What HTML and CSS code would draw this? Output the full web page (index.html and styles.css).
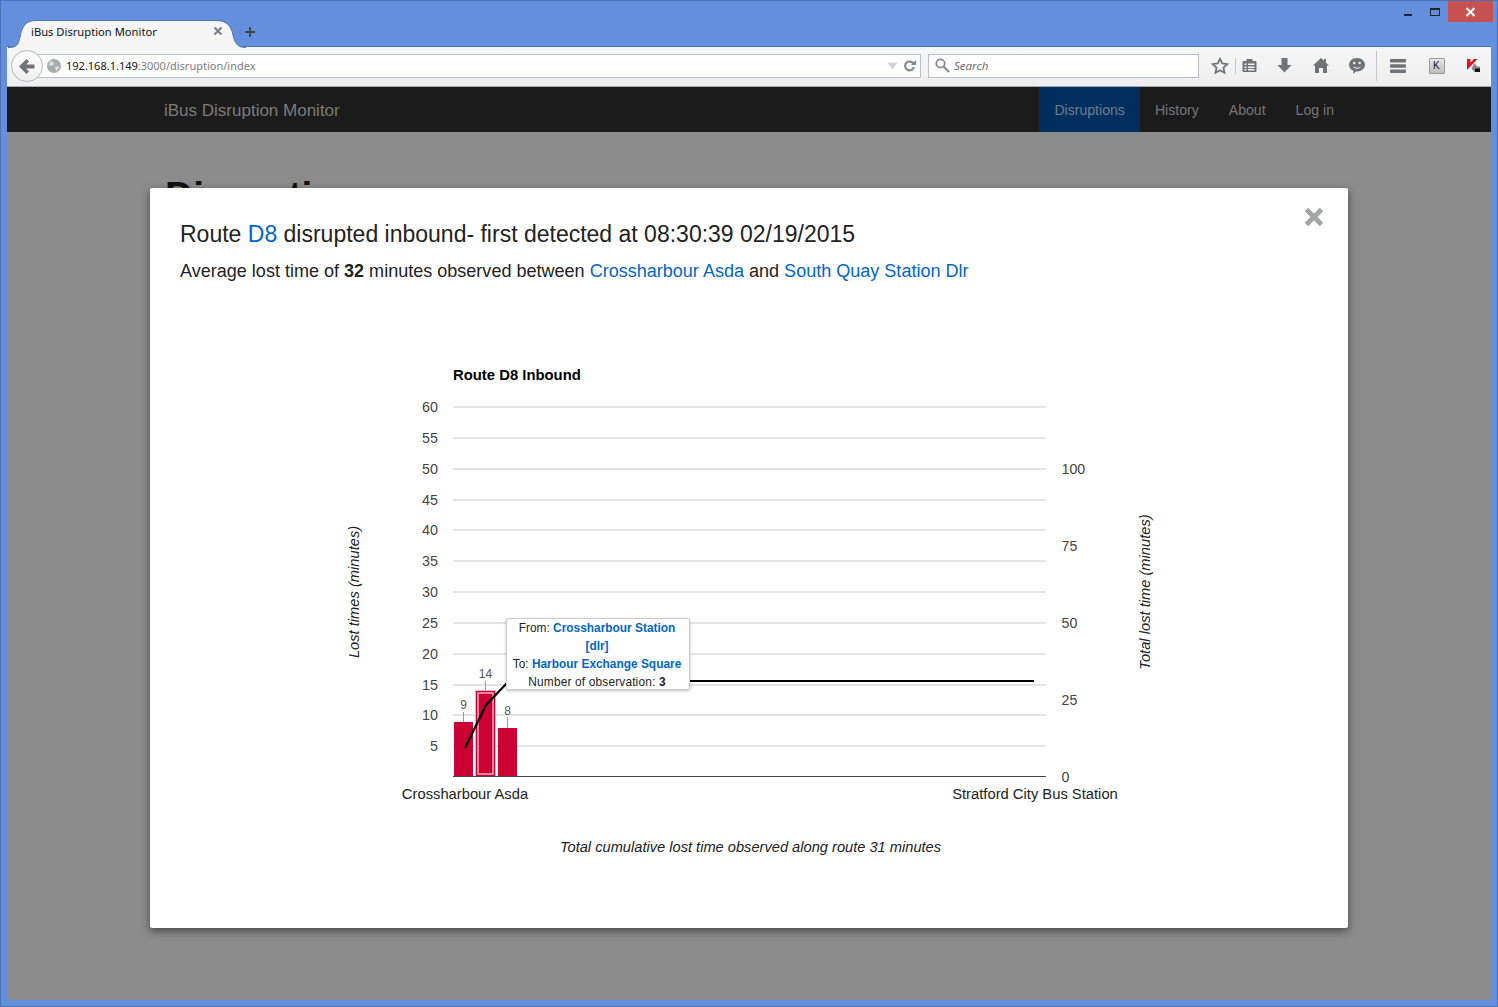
FILE: index.html
```html
<!DOCTYPE html>
<html lang="en">
<head>
    <meta charset="UTF-8">
    <title>iBus Disruption Monitor</title>
    <link rel="stylesheet" href="styles.css">
</head>
<body>
<div class="window">
    <div class="titlebar">
        <div class="tab">
            <svg class="tab-shape" width="240" height="29" viewBox="0 0 240 29"><path d="M0 28.500C9 28.500 10 26 12 18 14 8 17 1.500 28 1.500H208C219 1.500 223 7 225 16 227 25 230 28.500 238 28.500" fill="#f5f5f5" stroke="#4a73b8"/></svg>
            <span class="tab-title">iBus Disruption Monitor</span>
            <svg class="tab-close" width="10" height="10" viewBox="0 0 10 10"><path d="M1.500 1.500l7 7M8.500 1.500l-7 7" stroke="#7d8084" stroke-width="2.200"/></svg>
        </div>
        <svg class="new-tab" width="12" height="12" viewBox="0 0 12 12"><path d="M6 1v10M1 6h10" stroke="#44464a" stroke-width="2"/></svg>
        <div class="win-buttons">
            <span class="win-min"></span>
            <span class="win-max"></span>
            <span class="win-close"><svg width="11" height="10" viewBox="0 0 11 10"><path d="M1.500 1l8 8M9.500 1l-8 8" stroke="#fff" stroke-width="2"/></svg></span>
        </div>
    </div>

    <div class="toolbar">
        <div class="back-btn">
            <svg width="16" height="15" viewBox="0 0 16 15"><path d="M7.500 0L10 2.500 7 5.500H15.500V9.500H7L10 12.500 7.500 15 0 7.500z" fill="#6f7276"/></svg>
        </div>
        <div class="urlbar">
            <svg class="globe" width="14" height="14" viewBox="0 0 14 14"><circle cx="7" cy="7" r="7" fill="#a9acaf"/><path d="M3 2l3 1 1 2-3 2-2-1zM8 8l3-1 1 2-3 3z" fill="#dfe0e1"/></svg>
            <span class="url"><span class="url-host">192.168.1.149</span>:3000/disruption/index</span>
            <svg class="url-drop" width="11" height="8" viewBox="0 0 11 8"><path d="M.5.500h10L5.500 7.500z" fill="#cdd3da"/></svg>
            <svg class="url-reload" width="13" height="13" viewBox="0 0 13 13"><path d="M10.500 5A4.400 4.400 0 1 0 10.800 8" fill="none" stroke="#7f8a96" stroke-width="2.200"/><path d="M8 6H13V1z" fill="#7f8a96"/></svg>
        </div>
        <div class="searchbar">
            <svg width="15" height="15" viewBox="0 0 15 15"><circle cx="5.500" cy="5.500" r="4.200" fill="none" stroke="#858a90" stroke-width="1.800"/><path d="M8.500 8.500l5.500 5.500" stroke="#858a90" stroke-width="2.200"/></svg>
            <span>Search</span>
        </div>
        <div class="tool-icons">
            <svg class="ic-star" width="18" height="17" viewBox="0 0 18 17"><path d="M9 1.800l2.200 4.700 5.100.6-3.800 3.500 1 5.100L9 13.200l-4.500 2.500 1-5.100L1.700 7.100l5.100-.6z" fill="none" stroke="#6f7276" stroke-width="1.800"/></svg>
            <span class="tool-sep"></span>
            <svg class="ic-list" width="15" height="15" viewBox="0 0 15 15"><path d="M1.500 3h3V1h6v2h3a1 1 0 0 1 1 1v9a1 1 0 0 1-1 1h-12a1 1 0 0 1-1-1V4a1 1 0 0 1 1-1z" fill="#6f7276"/><path d="M2.500 5.500h2v1.500h-2zM6 5.500h6.500v1.500H6zM2.500 8.500h2V10h-2zM6 8.500h6.500V10H6zM2.500 11h2v1.500h-2zM6 11h6.500v1.500H6z" fill="#f3f3f3"/></svg>
            <svg class="ic-down" width="15" height="15" viewBox="0 0 15 15"><path d="M4.500 0h6v7h4l-7 7.500L.5 7h4z" fill="#6f7276"/></svg>
            <svg class="ic-home" width="16" height="15" viewBox="0 0 16 15"><path d="M8 0l3 2.800V1h2v3.700l3 2.800h-2V15h-4v-5H6v5H2V7.500H0z" fill="#6f7276"/></svg>
            <svg class="ic-chat" width="16" height="16" viewBox="0 0 16 16"><path d="M8 0c4.400 0 8 2.900 8 6.800s-3.600 6.700-8 6.700l-1 0-3 2.300.4-3C1.600 11.700 0 9.500 0 6.800 0 2.900 3.600 0 8 0z" fill="#6f7276"/><circle cx="5.300" cy="5" r="1.200" fill="#f3f3f3"/><circle cx="10.700" cy="5" r="1.200" fill="#f3f3f3"/><path d="M3.700 8c1.800 2.200 6.800 2.200 8.600 0-1 3.600-7.600 3.600-8.600 0z" fill="#f3f3f3"/></svg>
            <span class="tool-sep tall"></span>
            <svg class="ic-menu" width="16" height="14" viewBox="0 0 16 14"><path d="M1 0h14a1 1 0 0 1 1 1v1.500a1 1 0 0 1-1 1H1a1 1 0 0 1-1-1V1a1 1 0 0 1 1-1zM1 5.300h14a1 1 0 0 1 1 1v1.400a1 1 0 0 1-1 1H1a1 1 0 0 1-1-1V6.300a1 1 0 0 1 1-1zM1 10.500h14a1 1 0 0 1 1 1V13a1 1 0 0 1-1 1H1a1 1 0 0 1-1-1v-1.500a1 1 0 0 1 1-1z" fill="#6f7276"/></svg>
            <span class="ic-kb">K</span>
            <svg class="ic-kasp" width="13" height="13" viewBox="0 0 13 13"><path d="M0 0h13v13H0z" fill="#fff"/><path d="M0 0h3.500v3.500L7 0h3.500L0 11z" fill="#e8111f"/><path d="M7 4l3.500 3.500H13V13H7.500L4.500 10z" fill="#8a8a8a"/><path d="M8 9.500h5V13H8z" fill="#111"/></svg>
        </div>
    </div>

    <div class="page">
        <nav class="navbar">
            <a class="brand" href="#">iBus Disruption Monitor</a>
            <ul class="nav-links">
                <li class="active"><a href="#">Disruptions</a></li>
                <li><a href="#">History</a></li>
                <li><a href="#">About</a></li>
                <li><a href="#">Log in</a></li>
            </ul>
        </nav>
        <div class="backdrop">
            <h1 class="page-title">Disruptions</h1>
            <div class="modal">
                <svg class="modal-close" width="20" height="20" viewBox="0 0 20 20"><path d="M2.500 2.500l15 15M17.500 2.500l-15 15" stroke="#a2a4a8" stroke-width="4.800"/></svg>
                <h2>Route <a href="#">D8</a> disrupted inbound- first detected at 08:30:39 02/19/2015</h2>
                <p class="lede">Average lost time of <b>32</b> minutes observed between <a href="#">Crossharbour Asda</a> and <a href="#">South Quay Station Dlr</a></p>

                <div class="chart">
                    <svg class="chart-svg" width="1198" height="560" viewBox="150 320 1198 560">
                        <text class="chart-title" x="453" y="380">Route D8 Inbound</text>
                        <g class="grid">
                            <path d="M453 407H1046M453 438H1046M453 469H1046M453 500H1046M453 530H1046M453 561H1046M453 592H1046M453 623H1046M453 654H1046M453 685H1046M453 715H1046M453 746H1046"/>
                        </g>
                        <g class="tick-left">
                            <text x="438" y="412">60</text>
                            <text x="438" y="443">55</text>
                            <text x="438" y="474">50</text>
                            <text x="438" y="505">45</text>
                            <text x="438" y="535">40</text>
                            <text x="438" y="566">35</text>
                            <text x="438" y="597">30</text>
                            <text x="438" y="628">25</text>
                            <text x="438" y="659">20</text>
                            <text x="438" y="690">15</text>
                            <text x="438" y="720">10</text>
                            <text x="438" y="751">5</text>
                        </g>
                        <g class="tick-right">
                            <text x="1061.500" y="474">100</text>
                            <text x="1061.500" y="551">75</text>
                            <text x="1061.500" y="628">50</text>
                            <text x="1061.500" y="705">25</text>
                            <text x="1061.500" y="782">0</text>
                        </g>
                        <text class="axis-title" transform="translate(359 592) rotate(-90)">Lost times (minutes)</text>
                        <text class="axis-title" transform="translate(1150 592) rotate(-90)">Total lost time (minutes)</text>

                        <path class="stem" d="M463.500 712V722M485.500 681V691M507.500 717V728"/>
                        <rect class="bar" x="454" y="722" width="19" height="55"/>
                        <rect class="bar-halo" x="475.500" y="690.500" width="20" height="86"/>
                        <rect class="bar-hover" x="478" y="693" width="15" height="81"/>
                        <rect class="bar" x="498" y="728" width="19" height="49"/>
                        <text class="bar-label" x="463.500" y="709">9</text>
                        <text class="bar-label" x="485.500" y="678">14</text>
                        <text class="bar-label" x="507.500" y="715">8</text>
                        <path class="baseline" d="M453 776.500H1046"/>
                        <path class="trend" d="M465 748L486 705 507 683 520 681H1034"/>

                        <text class="cat" x="465" y="799">Crossharbour Asda</text>
                        <text class="cat" x="1035" y="799">Stratford City Bus Station</text>
                        <text class="note" x="750.500" y="852">Total cumulative lost time observed along route 31 minutes</text>
                    </svg>
                    <div class="tooltip">
                        <div>From: <b>Crossharbour Station [dlr]</b></div>
                        <div>To: <b>Harbour Exchange Square</b></div>
                        <div class="tip-count">Number of observation: <strong>3</strong></div>
                    </div>
                </div>
            </div>
        </div>
    </div>
</div>
</body>
</html>
```

FILE: styles.css
```css
* { margin: 0; padding: 0; box-sizing: border-box; }
html, body { height: 100%; overflow: hidden; }
body { font-family: "Liberation Sans", Arial, sans-serif; background: #648fdc; }
a { text-decoration: none; }
ul { list-style: none; }

.window { height: 1007px; display: flex; flex-direction: column; background: #648fdc; border: 1px solid #4a73b8; padding: 0 6px 6px 6px; }

/* title bar and tabs */
.titlebar { height: 45px; flex: none; display: flex; align-items: flex-end; position: relative; z-index: 1; }
.tab { width: 226px; height: 28px; margin: 0 0 -1px 1px; position: relative; padding: 0 11px 4px 23px; display: flex; align-items: center; justify-content: space-between; font-family: "Noto Sans", sans-serif; font-size: 11.200px; color: #111; }
.tab-shape { position: absolute; left: 0; top: 0; }
.tab-title, .tab-close { position: relative; }
.new-tab { margin: 0 0 8px 10px; }
.win-buttons { position: absolute; top: 0; right: -2px; display: flex; align-items: flex-start; }
.win-min { width: 8px; height: 2px; background: #222; margin: 13px 18px 0 0; }
.win-max { width: 10px; height: 8px; border: 1px solid #222; border-top-width: 2px; margin: 7px 8px 0 0; }
.win-close { width: 45px; height: 21px; background: #c75050; display: flex; align-items: center; justify-content: center; }

/* toolbar */
.toolbar { height: 41px; flex: none; background: linear-gradient(#f6f6f6, #eeeeee); border-top: 1px solid #4a73b8; border-bottom: 1px solid #a6a8ab; display: flex; align-items: center; padding: 0 0 2px 21px; position: relative; }
.back-btn { position: absolute; left: 4px; top: 3px; width: 32px; height: 32px; border-radius: 50%; background: linear-gradient(#fff, #eee); border: 1px solid #b5b7ba; display: flex; align-items: center; justify-content: center; }
.urlbar { width: 893px; height: 24px; background: #fff; border: 1px solid #b7c0ca; display: flex; align-items: center; padding: 0 4px 0 18px; font-family: "Noto Sans", sans-serif; font-size: 11px; color: #7c7c7c; }
.globe { margin-right: 5px; }
.url { flex: 1; }
.url-host { color: #111; }
.url-drop { margin-right: 5px; }
.searchbar { width: 271px; height: 24px; margin-left: 7px; background: #fff; border: 1px solid #b7c0ca; display: flex; align-items: center; gap: 4px; padding: 0 6px; font-family: "Noto Sans", sans-serif; font-style: italic; font-size: 11.500px; color: #6f6f6f; }
.tool-icons { display: flex; align-items: center; height: 100%; margin-left: 12px; }
.tool-sep { width: 1px; height: 16px; background: #c4c6c9; margin: 0 6px 0 6px; }
.tool-sep.tall { height: 30px; margin: 0 13px 0 11px; }
.ic-down { margin-left: 20px; }
.ic-home { margin-left: 21px; }
.ic-chat { margin-left: 20px; }
.ic-kb { width: 16px; height: 16px; margin-left: 23px; border: 1px solid #999b9e; border-radius: 1px; background: linear-gradient(#e6e6e6, #bdbdbd); font-size: 10px; line-height: 14px; padding-left: 3px; color: #111; }
.ic-kasp { margin-left: 22px; }

/* page */
.page { flex: 1; display: flex; flex-direction: column; min-height: 0; }
.navbar { height: 45px; flex: none; background: #1b1b1b; display: flex; justify-content: space-between; padding: 0 142px 0 157px; }
.brand { font-size: 17px; line-height: 47px; color: #7b7b7b; }
.nav-links { display: flex; }
.nav-links a { display: block; padding: 0 15px; font-size: 14.100px; line-height: 47px; color: #777; }
.nav-links .active a { background: #002f5f; color: #6f7f8f; }

.backdrop { flex: 1; background: #8c8c8c; position: relative; overflow: hidden; }
.page-title { font-size: 39px; font-weight: 700; color: #111; position: absolute; left: 158px; top: 42px; }
.modal { position: absolute; left: 143px; top: 56px; width: 1198px; height: 740px; background: #fff; border-radius: 2px; box-shadow: 0 3px 9px rgba(0, 0, 0, .5); padding: 30px; color: #222; }
.modal h2 { font-size: 23px; font-weight: 400; line-height: 32px; }
.modal a { color: #0066cc; }
.modal-close { position: absolute; right: 24px; top: 19px; }
.lede { font-size: 18.050px; line-height: 26px; margin-top: 8px; }
.lede b { font-weight: 700; }

/* chart */
.chart { position: relative; margin: 36px -30px 0; width: 1198px; height: 560px; }
.chart-svg { display: block; font-family: "Liberation Sans", Arial, sans-serif; }
.chart-title { font-size: 14.850px; font-weight: 700; fill: #000; }
.grid path { stroke: #e4e4e4; stroke-width: 2; fill: none; }
.tick-left text { font-size: 14.300px; fill: #444; text-anchor: end; }
.tick-right text { font-size: 14.200px; fill: #444; }
.axis-title { font-size: 14.700px; font-style: italic; fill: #222; text-anchor: middle; }
.bar { fill: #cc0033; }
.bar-halo { fill: #cc0033; stroke: #e6b3c2; stroke-width: 1; }
.bar-hover { fill: #cc0033; stroke: #f0b0c0; stroke-width: 1.500; }
.stem { stroke: #999; stroke-width: 1; fill: none; }
.bar-label { font-size: 12px; fill: #555; text-anchor: middle; }
.baseline { stroke: #444; stroke-width: 1; fill: none; }
.trend { stroke: #000; stroke-width: 2.200; fill: none; }
.cat { font-size: 14.750px; fill: #222; text-anchor: middle; }
.note { font-size: 14.650px; font-style: italic; fill: #222; text-anchor: middle; }

.tooltip { position: absolute; left: 356px; top: 298px; width: 184px; height: 72px; background: #fff; border: 1px solid #ccc; border-radius: 2px; box-shadow: 0 1px 3px rgba(0, 0, 0, .25); padding: 0 5px 0 3px; font-size: 11.900px; line-height: 18px; text-align: center; color: #222; }
.tooltip b { color: #0066cc; font-weight: 700; }
.tip-count { letter-spacing: .16px; }
```
